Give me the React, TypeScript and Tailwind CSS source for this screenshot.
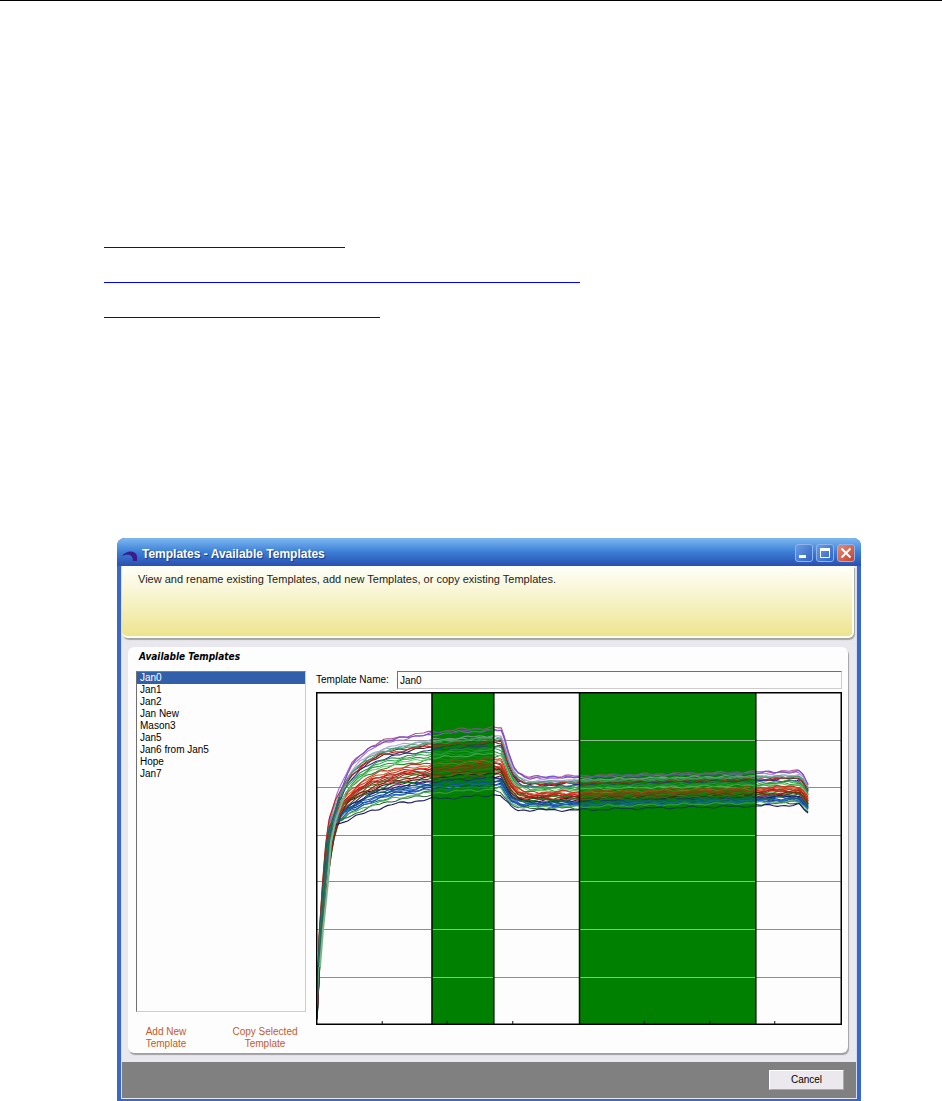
import { useState } from "react";

const templates = [
  "Jan0",
  "Jan1",
  "Jan2",
  "Jan New",
  "Mason3",
  "Jan5",
  "Jan6 from Jan5",
  "Hope",
  "Jan7",
];

// upper and lower envelope of the traces, in chart units
const upper = [
  [1, 310], [4, 240], [8, 190], [12, 150], [16, 126], [22, 101], [28, 86], [34, 74],
  [44, 63], [54, 55], [66, 49], [79, 46], [96, 43], [115, 40], [150, 37], [177, 36],
  [186, 36], [189, 45], [193, 60], [198, 73], [203, 80], [209, 84], [214, 85],
  [263, 84], [340, 82], [440, 80], [485, 79], [489, 82], [494, 92],
];
const lower = [
  [1, 328], [4, 250], [8, 205], [11, 174], [14, 150], [17, 138], [21, 133], [34, 127],
  [54, 119], [79, 112], [115, 107], [150, 105], [177, 103], [185, 103], [190, 109],
  [196, 115], [203, 118], [214, 118], [263, 118], [340, 116], [440, 114], [485, 113],
  [489, 117], [494, 121],
];

// height within the envelope, colour
const traces: [number, string][] = [
  [0.33, "#30b050"], [0.72, "#701040"], [0.19, "#8a1a1a"], [0.54, "#a01818"], [0.88, "#0f7a5a"],
  [0, "#b2508a"], [0.76, "#0a4fa0"], [0.42, "#1f8f2f"], [0.23, "#333333"], [0.6, "#c41c1c"],
  [0.84, "#103070"], [0.14, "#8fb8c8"], [0.49, "#b07030"], [0.68, "#101010"], [0.94, "#2a6a3a"],
  [0.27, "#2a2aa0"], [0.66, "#e03030"], [0.36, "#1f9f3f"], [0.8, "#0a3fc0"], [0.04, "#9a6be0"],
  [0.58, "#7a3a10"], [0.17, "#2f9f6a"], [0.74, "#1a1a80"], [0.52, "#e02a1a"], [0.91, "#50b050"],
  [0.62, "#2f7f1f"], [0.12, "#b9a0d8"], [0.86, "#2060d0"], [0.39, "#70c070"], [0.7, "#207020"],
  [0.21, "#c02020"], [0.56, "#c02818"], [0.82, "#1f60c0"], [0.46, "#d03020"], [0.02, "#7a4fd0"],
  [0.64, "#802010"], [0.78, "#106060"], [1, "#18186a"], [0.3, "#3a8a4a"], [0.16, "#60a080"],
];

function at(points: number[][], x: number) {
  let i = 1;
  while (i < points.length - 1 && points[i][0] < x) i++;
  const [x0, y0] = points[i - 1];
  const [x1, y1] = points[i];
  return y0 + ((y1 - y0) * (x - x0)) / (x1 - x0);
}

function tracePath(level: number, index: number) {
  let d = "";
  const lag = (index % 6) - 2;
  for (let x = 1; x <= 494; x += x < 24 || (x > 174 && x < 215) || x > 480 ? 1 : 4) {
    const wobble =
      x < 24 ? 0 : Math.sin(x * 0.17 + index * 2.3) * 0.8 + Math.sin(x * 0.41 + index * 4.1) * 0.7;
    const y = at(upper, x) * (1 - level) + at(lower, x) * level + wobble;
    const shift = x < 34 ? (lag * Math.min(x, 34 - x)) / 10 : 0;
    d += `${d ? "L" : "M"}${(x + shift).toFixed(1)} ${y.toFixed(1)}`;
  }
  return d;
}

function Chart() {
  return (
    <svg
      viewBox="0 0 528 333"
      preserveAspectRatio="none"
      className="block h-[333px] w-full"
      role="img"
      aria-label="Template traces"
    >
      <rect width="528" height="333" fill="#fdfdfd" />
      <rect x="116" width="62" height="333" fill="#008000" />
      <rect x="264" width="177" height="333" fill="#008000" />
      {[48, 95, 143, 189, 237, 285].map((y) => (
        <g key={y}>
          <path d={`M0 ${y + 0.5}H528`} stroke="#8c8c8c" />
          <path d={`M116 ${y + 0.5}H178M264 ${y + 0.5}H441`} stroke="#8fbc8f" />
        </g>
      ))}
      {traces.map(([level, color], i) => (
        <path key={i} d={tracePath(level, i)} fill="none" stroke={color} strokeWidth="1.1" />
      ))}
      <path d="M3 275L5 238L9 190L13 150L17 127L24 105" fill="none" stroke="#1f6a5a" strokeWidth="2" />
      <path d="M4 275L7 238L12 190L15 150L20 127L29 103" fill="none" stroke="#7ab88a" strokeWidth="2" />
      <g fill="#008000" fillOpacity="0.35">
        <rect x="116" y="30" width="62" height="82" />
        <rect x="264" y="76" width="177" height="45" />
      </g>
      <path d="M116.5 0V333M178.5 0V333M264.5 0V333M441.5 0V333" stroke="#001400" strokeWidth="1.5" />
      <path d="M66.5 329v4M131.5 329v4M197.5 329v4M329.5 329v4M395.5 329v4M460.5 329v4" stroke="#111" />
      <rect x="0.5" y="0.5" width="527" height="332" fill="none" stroke="#000" strokeWidth="2" />
    </svg>
  );
}

function TitleBar() {
  const button = "h-[18px] w-[18px] rounded-[3px] border border-[#8fb4ea]";
  return (
    <header className="flex h-7 items-center rounded-t-lg bg-linear-to-b from-[#7db8f0] via-[#3c7fd6] to-[#2a4fb0] pr-1.5 pl-1">
      <svg viewBox="0 0 18 14" className="mt-2 h-3.5 w-[18px]" aria-hidden="true">
        <path d="M1 7C5 1 15 1 16 7v5h-4C12 7 9 4 1 7Z" fill="#3c1b8c" />
      </svg>
      <h1 className="ml-[3px] flex-1 pt-1 text-[12px] font-bold text-white [text-shadow:1px_1px_1px_#173a8a]">
        Templates - Available Templates
      </h1>
      <div className="mt-0.5 flex gap-[3px]">
        <button aria-label="Minimize" className={`${button} bg-linear-to-br from-[#6b9ce8] to-[#2f62c0]`}>
          <svg viewBox="0 0 16 16"><path d="M3 11.5h7" stroke="#fff" strokeWidth="3" /></svg>
        </button>
        <button aria-label="Maximize" className={`${button} bg-linear-to-br from-[#6b9ce8] to-[#2f62c0]`}>
          <svg viewBox="0 0 16 16"><path d="M3.5 4v8.5h9V4" fill="none" stroke="#fff" /><path d="M3 4.5h10" stroke="#fff" strokeWidth="3" /></svg>
        </button>
        <button aria-label="Close" className={`${button} bg-linear-to-br from-[#e58a78] to-[#c2402c]`}>
          <svg viewBox="0 0 16 16"><path d="M3.5 3.5l9 9M12.5 3.5l-9 9" stroke="#fff" strokeWidth="2" /></svg>
        </button>
      </div>
    </header>
  );
}

export default function App() {
  const [selected, setSelected] = useState("Jan0");
  const [name, setName] = useState("Jan0");

  return (
    <main className="border-t border-black bg-white font-['Liberation_Sans',sans-serif] text-[10px] leading-3 text-black">
      <nav className="flex flex-col gap-[34px] pt-[246px] pr-4 pl-[104px]">
        <a href="#adding" aria-label="Adding templates" className="block h-px w-[241px] bg-[#0000ee]" />
        <a href="#renaming" aria-label="Viewing and renaming templates" className="block h-px w-[476px] bg-[#0000ff]" />
        <a href="#copying" aria-label="Copying templates" className="block h-px w-[276px] bg-[#0000ee]" />
      </nav>

      <section className="mt-[220px] mr-[81px] ml-[117px] rounded-t-lg bg-[#3a68c8]">
        <TitleBar />
        <div className="mx-1 border-x border-[#d5def0] bg-[#e8e8ee]">
          <div className="mr-0.5 h-[72px] rounded-b-md border-r-2 border-b-2 border-[#fffef0] bg-linear-to-b from-[#fffffa] to-[#eee48e] px-4 pt-[7px] text-[#222] shadow-[1px_2px_1px_#a5a5a0]">
            <p className="text-[11px] leading-3">
              View and rename existing Templates, add new Templates, or copy existing Templates.
            </p>
          </div>

          <div className="mt-[9px] mr-2 ml-1.5 rounded-md bg-[#fdfdfd] pr-1.5 pl-2 shadow-[1px_2px_1px_#a0a0a4]">
            <h2 className="pt-1 pb-2 pl-[3px] font-['DejaVu_Sans_Condensed','DejaVu_Sans',sans-serif] text-[10px] font-bold italic">
              Available Templates
            </h2>
            <div className="flex gap-2.5">
              <div className="w-[170px] shrink-0">
                <ul
                  role="listbox"
                  aria-label="Available Templates"
                  className="h-[341px] border border-t-[#808080] border-r-[#ccc] border-b-[#ccc] border-l-[#707070]"
                >
                  {templates.map((item) => (
                    <li
                      key={item}
                      role="option"
                      aria-selected={item === selected}
                      onClick={() => {
                        setSelected(item);
                        setName(item);
                      }}
                      className={item === selected ? "bg-[#315fa9] px-[3px] text-white" : "px-[3px]"}
                    >
                      {item}
                    </li>
                  ))}
                </ul>
                <div className="flex justify-between pt-3.5 pr-1 pb-[3px] pl-1 text-[#c65a28]">
                  <button className="w-[52px]">Add New Template</button>
                  <button className="w-[74px]">Copy Selected Template</button>
                </div>
              </div>
              <div className="min-w-0 flex-1">
                <div className="mb-[3px] flex h-[18px] items-center">
                  <label htmlFor="name" className="w-[81px] whitespace-nowrap">Template Name:</label>
                  <input
                    id="name"
                    value={name}
                    onChange={(e) => setName(e.target.value)}
                    className="h-[18px] min-w-0 flex-1 border border-t-[#707070] border-r-[#ccc] border-b-[#ccc] border-l-[#707070] px-0.5"
                  />
                </div>
                <Chart />
              </div>
            </div>
          </div>

          <footer className="mt-[9px] flex h-9 items-center justify-end bg-[#808080] pr-3">
            <button className="h-5 w-[75px] border border-t-white border-r-[#aaa] border-b-[#aaa] border-l-white bg-[#ebe9ed]">
              Cancel
            </button>
          </footer>
          <div className="h-px bg-[#e8e8ee]" />
        </div>
        <div className="h-0.5" />
      </section>
    </main>
  );
}
